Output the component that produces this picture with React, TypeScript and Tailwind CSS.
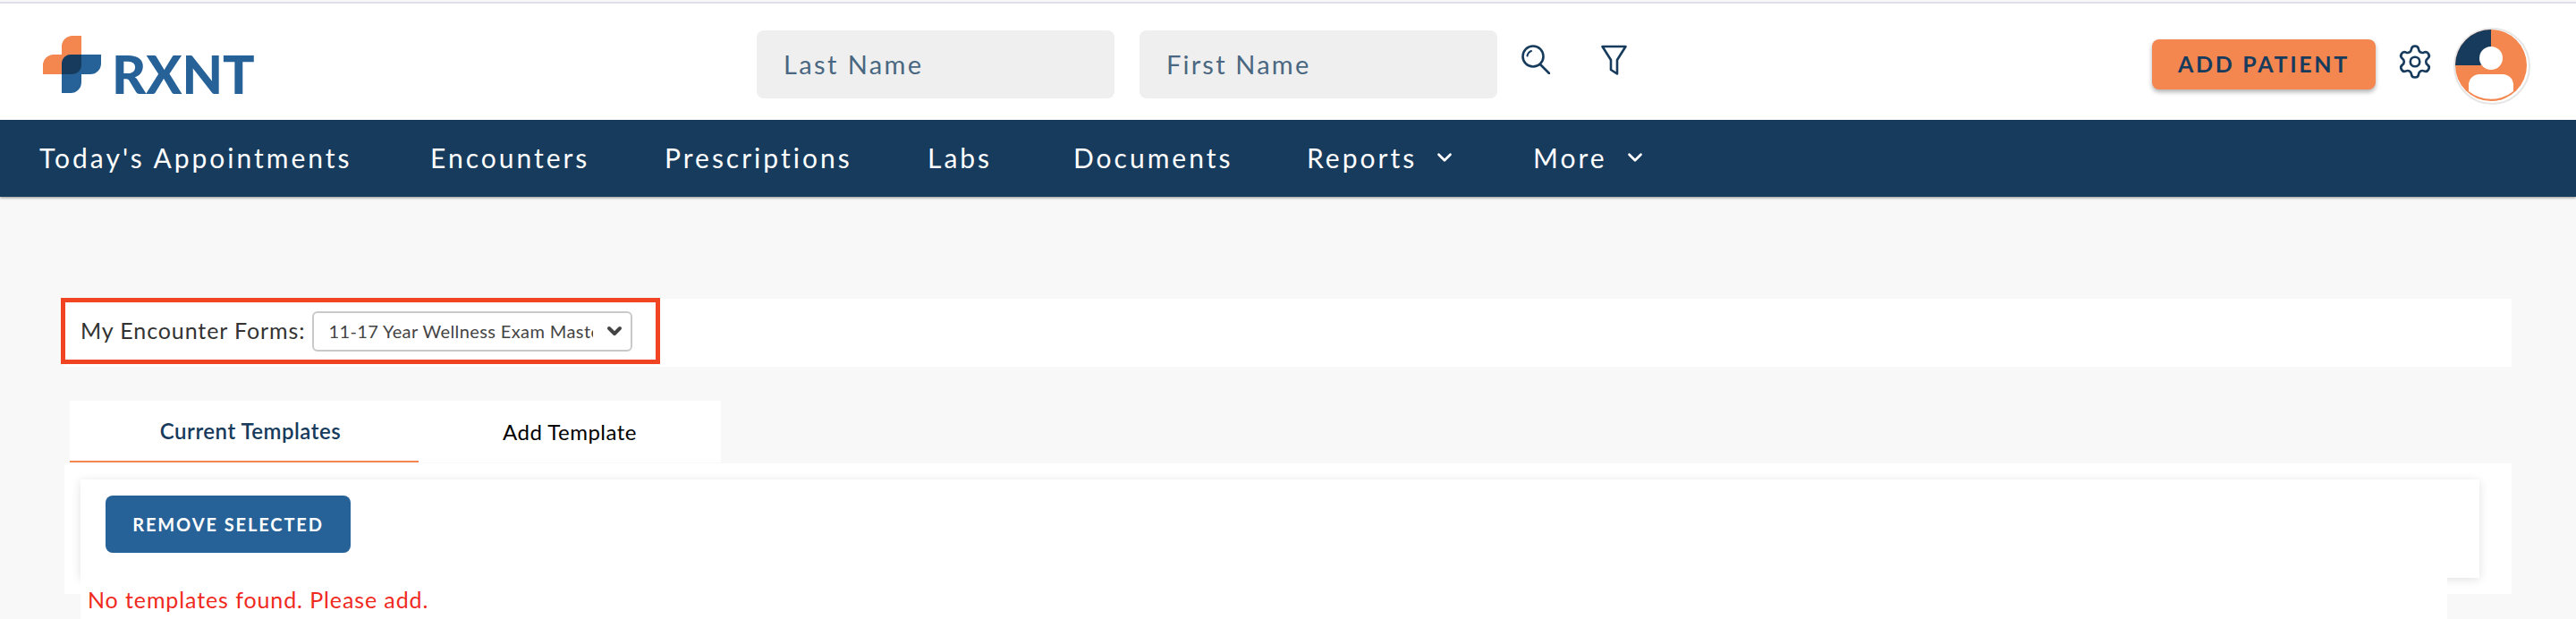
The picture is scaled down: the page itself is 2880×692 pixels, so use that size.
import React from 'react';
import { ChevronDown, Settings } from 'lucide-react';

const navItems = [
  { label: "Today's Appointments", width: 'w-[437px]' },
  { label: 'Encounters', width: 'w-[262px]' },
  { label: 'Prescriptions', width: 'w-[294px]' },
  { label: 'Labs', width: 'w-[163px]' },
  { label: 'Documents', width: 'w-[261px]' },
  { label: 'Reports', width: 'w-[253px]', caret: true },
  { label: 'More', width: 'w-[150px]', caret: true },
];

function Logo() {
  return (
    <div className="flex items-end gap-[12px]">
      <svg width="65" height="64" viewBox="0 0 65 64">
        <path fill="#f4864f" d="M33 0H43V33a10 10 0 0 1-10 10H0V33a12 12 0 0 1 12-12H21V12A12 12 0 0 1 33 0Z" />
        <path fill="#266298" d="M31 21H65V31a12 12 0 0 1-12 12H43V52a12 12 0 0 1-12 12H21V31a10 10 0 0 1 10-10Z" />
        <path fill="#163b5c" d="M31 21H43V33a10 10 0 0 1-10 10H21V31a10 10 0 0 1 10-10Z" />
      </svg>
      <span className="text-[59px] leading-[43px] font-black tracking-[0px] text-[#266298]">RXNT</span>
    </div>
  );
}

function SearchGlyph() {
  return (
    <svg width="32" height="33" viewBox="0 0 32 33" fill="none" stroke="#163b5c" strokeWidth="2.6" strokeLinecap="round">
      <circle cx="13" cy="13" r="11.5" />
      <path d="M21 22L31 32" />
      <path d="M6.5 12.5C7 9.5 8.5 8 11 7" strokeWidth="2" />
    </svg>
  );
}

function FilterGlyph() {
  return (
    <svg width="29" height="34" viewBox="0 0 29 34" fill="none" stroke="#163b5c" strokeWidth="2.6" strokeLinejoin="round">
      <path d="M1.5 2H27.5L18 17V32.5L11 28V17Z" />
    </svg>
  );
}

function Avatar() {
  return (
    <svg width="86" height="86" viewBox="0 0 86 86">
      <circle cx="43" cy="43" r="42" fill="#fff" stroke="#e6e6e6" strokeWidth="2" />
      <circle cx="42" cy="42" r="40" fill="#f4864f" />
      <path fill="#163b5c" d="M42 2V34L30 42H2A40 40 0 0 1 42 2Z" />
      <circle cx="42" cy="34" r="13" fill="#fff" />
      <path fill="#fff" d="M17 69V64A12 12 0 0 1 29 52H55A12 12 0 0 1 67 64V71A40 40 0 0 1 17 71Z" />
    </svg>
  );
}

export default function App() {
  return (
    <div className="h-[692px] overflow-hidden bg-[#f8f8f8] [font-family:Lato,sans-serif]">
      {/* Top bar */}
      <header className="relative h-[132px] border-t-[2px] border-[#e0dfe8] mt-[2px] bg-white pl-[48px] pr-[50px] flex items-start">
        <div className="mt-[36px] w-[798px]">
          <Logo />
        </div>
        <div className="mt-[30px] flex gap-[28px]">
          <div className="w-[400px] h-[76px] rounded-[8px] bg-[#efefef] flex items-center pl-[30px] text-[29px] tracking-[2.4px] text-[#4a6781]">Last Name</div>
          <div className="w-[400px] h-[76px] rounded-[8px] bg-[#efefef] flex items-center pl-[30px] text-[29px] tracking-[2.2px] text-[#4a6781]">First Name</div>
        </div>
        <div className="mt-[46px] ml-[27px] w-[89px]">
          <SearchGlyph />
        </div>
        <div className="mt-[46px] w-[616px]">
          <FilterGlyph />
        </div>
        <button className="mt-[40px] w-[250px] h-[56px] rounded-[8px] bg-[#f4864f] shadow-[0_3px_5px_rgba(0,0,0,0.3)] text-[25px] font-bold tracking-[2.7px] text-[#163b5c]">ADD PATIENT</button>
        <Settings className="mt-[44px] ml-[23px] text-[#163b5c]" size={42} strokeWidth={1.5} />
        <div className="mt-[27px] ml-[22px]">
          <Avatar />
        </div>
      </header>

      {/* Nav */}
      <nav className="h-[86px] bg-[#163b5c] shadow-[0_1px_3px_rgba(0,0,0,0.45)] pl-[44px] pb-[2px] flex items-center">
        {navItems.map((item) => (
          <div key={item.label} className={`${item.width} flex items-center gap-[18px] text-[30px] tracking-[3px] text-white`}>
            <span>{item.label}</span>
            {item.caret && <ChevronDown size={26} strokeWidth={2.5} />}
          </div>
        ))}
      </nav>

      {/* Form picker row */}
      <div className="mt-[114px] ml-[72px] mr-[72px] h-[76px] bg-white">
        <div className="relative -left-[4px] -top-[1px] w-[670px] h-[74px] border-[5px] border-[#f04423] flex items-center pl-[17px] gap-[8px]">
          <span className="text-[25px] tracking-[0.9px] text-[#333]">My Encounter Forms:</span>
          <div className="w-[358px] h-[45px] rounded-[6px] border-[2px] border-[#c9c9c9] bg-white flex items-center pl-[16px] pr-[6px] text-[20px] tracking-[0.4px] text-[#444]">
            <span className="flex-1 overflow-hidden whitespace-nowrap">11-17 Year Wellness Exam Master</span>
            <ChevronDown className="ml-[12px] text-[#444] shrink-0" size={24} strokeWidth={4} />
          </div>
        </div>
      </div>

      {/* Tabs */}
      <div className="mt-[38px] ml-[78px] w-[728px] h-[69px] bg-white flex">
        <div className="w-[390px] border-b-[2px] border-[#f4864f] pl-[14px] flex items-center justify-center text-[24px] font-semibold tracking-[0.5px] text-[#163b5c]">Current Templates</div>
        <div className="flex-1 flex items-center justify-center text-[24px] font-normal tracking-[0.5px] text-black">Add Template</div>
      </div>

      {/* Panel */}
      <div className="mt-px ml-[72px] mr-[72px] h-[146px] bg-white pt-[18px] pl-[18px]">
        <div className="mr-[36px] h-[110px] bg-white shadow-[0_2px_10px_rgba(0,0,0,0.12)] pt-[18px] pl-[28px]">
          <button className="w-[274px] h-[64px] rounded-[8px] bg-[#266298] text-[20px] font-bold tracking-[1.9px] text-white">REMOVE SELECTED</button>
        </div>
        <div className="relative mr-[72px] h-[46px] bg-white pl-[8px] pt-[6px] text-[25px] tracking-[0.9px] text-[#f02a1e]">No templates found. Please add.</div>
      </div>
    </div>
  );
}
